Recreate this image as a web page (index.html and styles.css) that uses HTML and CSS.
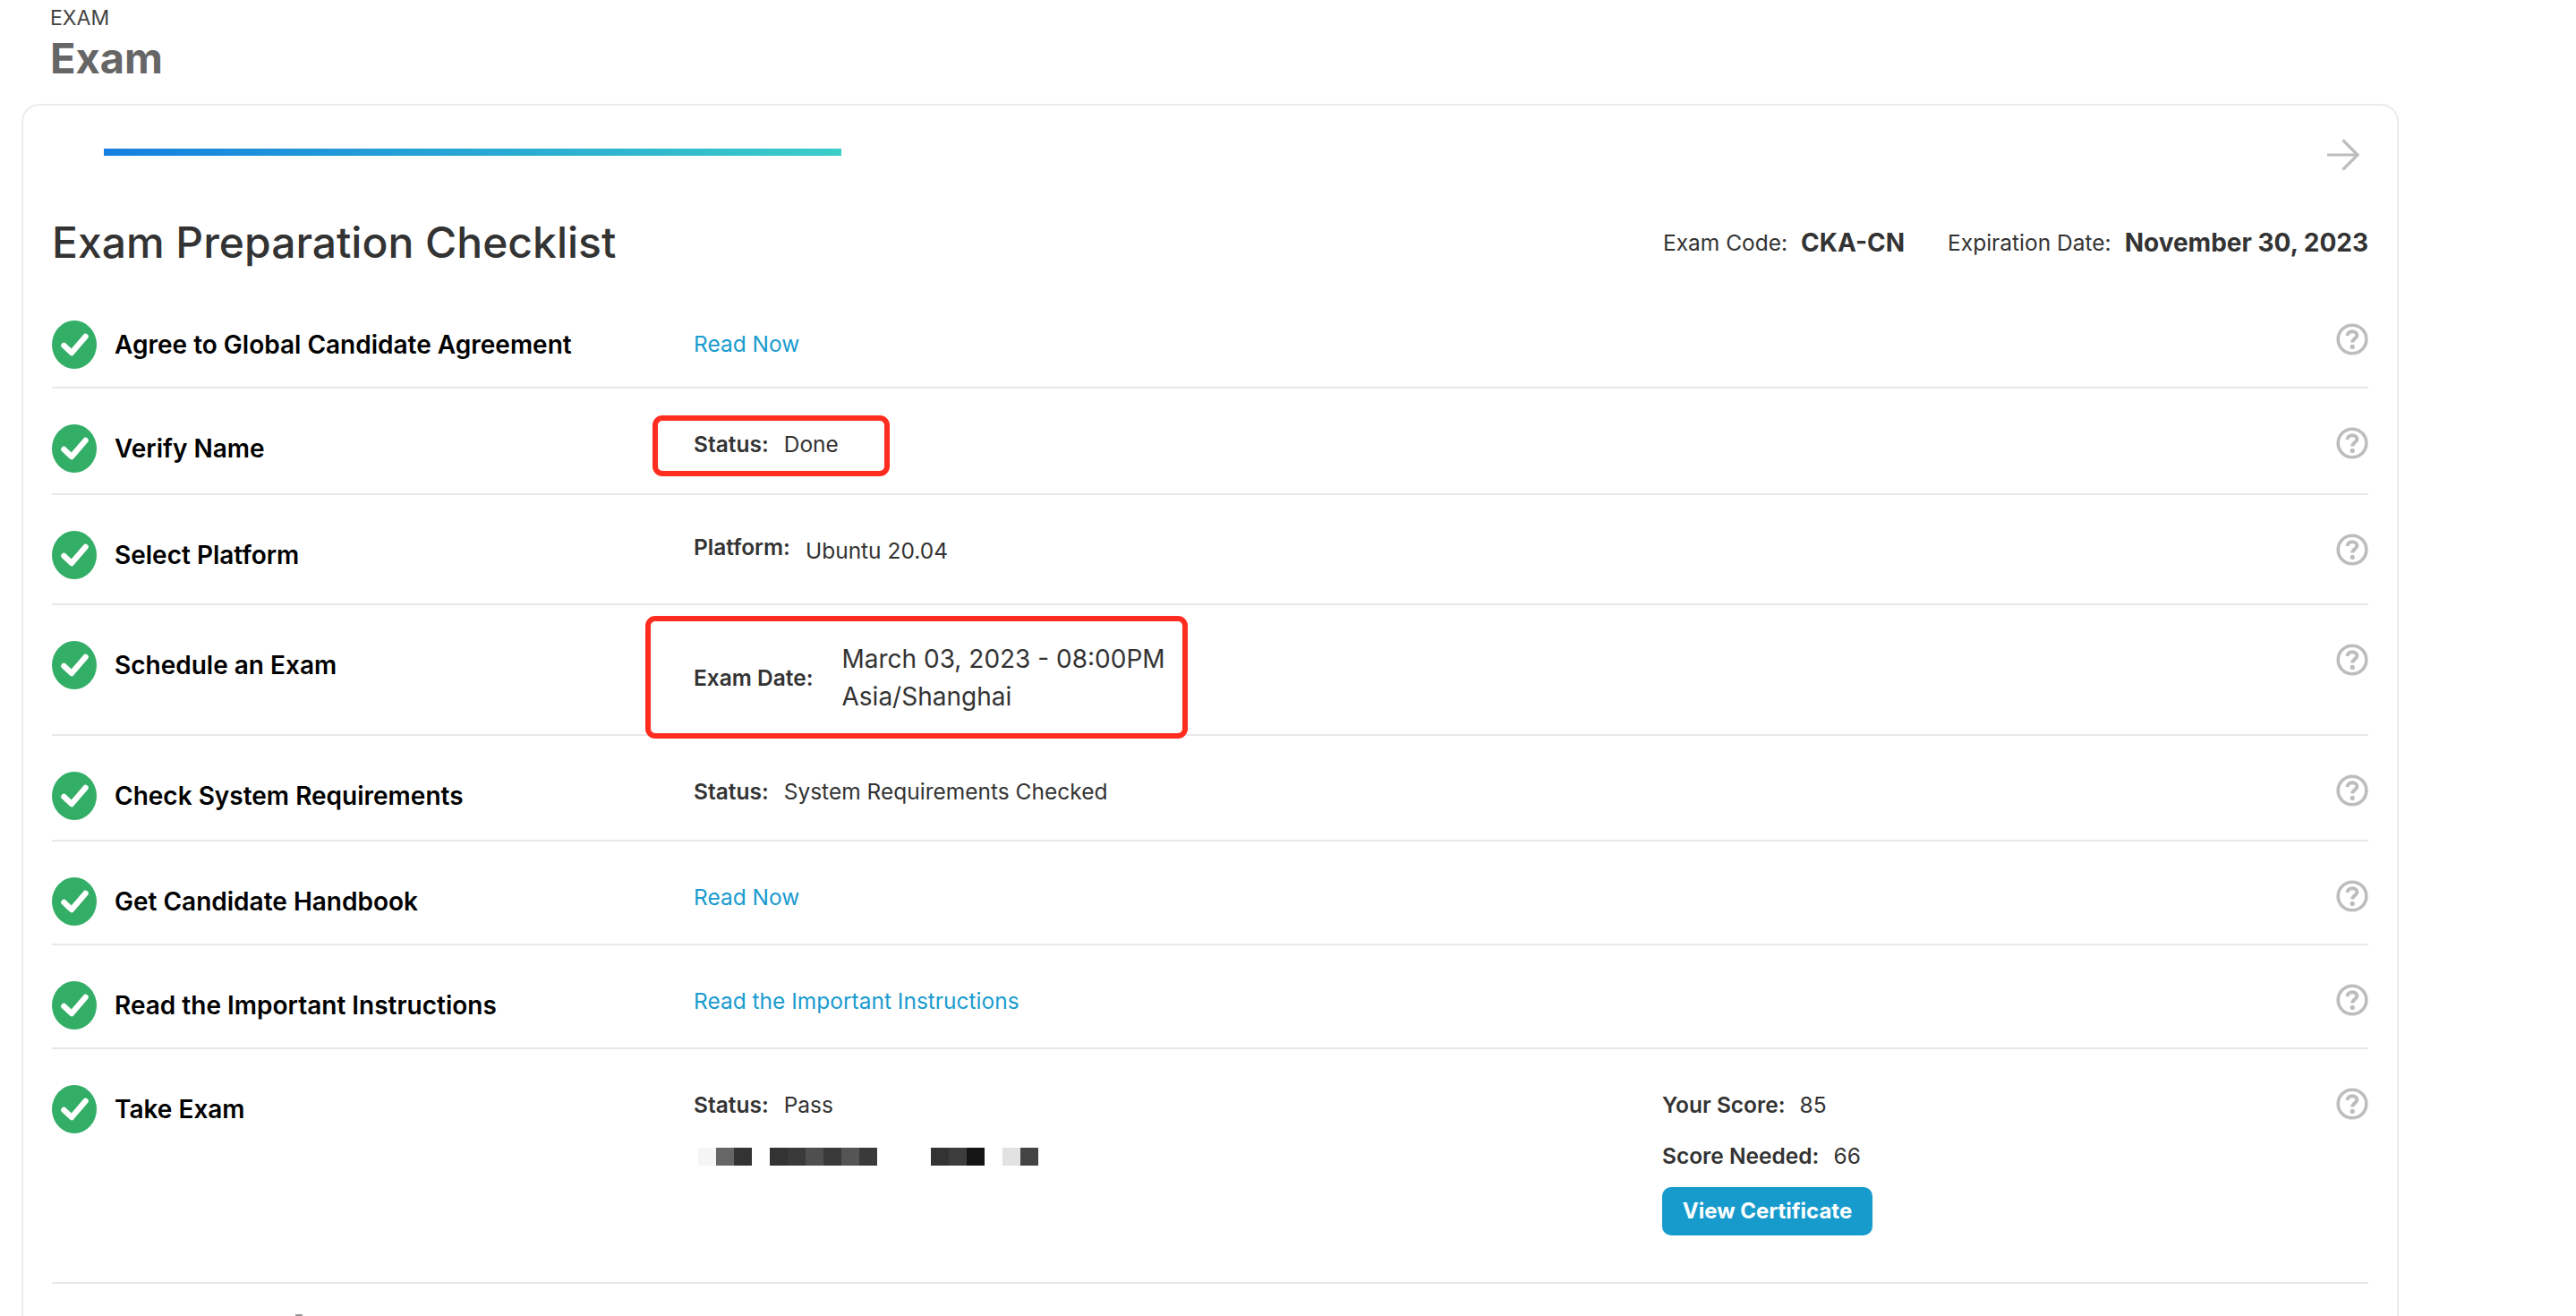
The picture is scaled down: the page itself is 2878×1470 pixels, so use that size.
FILE: index.html
```html
<!DOCTYPE html>
<html>

<head>
    <meta charset="UTF-8">
    <title>Exam</title>
    <link rel="stylesheet" href="styles.css">
</head>

<body>
    <svg class="defs" width="0" height="0">
        <symbol id="ok" viewBox="0 0 50 54">
            <ellipse cx="25" cy="27" rx="25" ry="27" fill="#33ae66" />
            <path d="M13.5 28 L22 36 L37.5 18" fill="none" stroke="#fff" stroke-width="6.5" stroke-linecap="round" stroke-linejoin="round" />
        </symbol>
        <symbol id="help" viewBox="0 0 36 36">
            <circle cx="18" cy="18" r="15.8" fill="none" stroke="#bdbdbd" stroke-width="3.6" />
            <path d="M12.6 14 C12.6 11 15 9.2 18 9.2 C21.2 9.2 23.4 11 23.4 13.6 C23.4 17 18.2 17.2 18.2 21.4" fill="none" stroke="#bdbdbd" stroke-width="4" />
            <circle cx="18.2" cy="26.4" r="2.6" fill="#bdbdbd" />
        </symbol>
    </svg>

    <div class="head">
        <div class="crumb">EXAM</div>
        <h1>Exam</h1>
    </div>

    <div class="card">
        <div class="steps">
            <div class="bar"></div>
            <svg class="next" viewBox="0 0 36 36">
                <path d="M0 18 H34 M17.5 1.5 L34 18 L17.5 34.5" fill="none" stroke="#bdbdbd" stroke-width="3.2" />
            </svg>
        </div>

        <div class="title">
            <h2>Exam Preparation Checklist</h2>
            <div class="meta">
                <span class="meta-key">Exam Code:</span><b class="meta-val">CKA-CN</b>
                <span class="meta-key second">Expiration Date:</span><b class="meta-val">November 30, 2023</b>
            </div>
        </div>

        <div class="row r1">
            <svg class="ok"><use href="#ok" /></svg>
            <div class="name">Agree to Global Candidate Agreement</div>
            <div class="info"><a href="#">Read Now</a></div>
            <svg class="help"><use href="#help" /></svg>
        </div>
        <div class="row r2">
            <svg class="ok"><use href="#ok" /></svg>
            <div class="name">Verify Name</div>
            <div class="info"><b>Status:</b><span>Done</span></div>
            <svg class="help"><use href="#help" /></svg>
            <div class="mark mark-a"></div>
        </div>
        <div class="row r3">
            <svg class="ok"><use href="#ok" /></svg>
            <div class="name">Select Platform</div>
            <div class="info"><b>Platform:</b><span>Ubuntu 20.04</span></div>
            <svg class="help"><use href="#help" /></svg>
        </div>
        <div class="row r4">
            <svg class="ok"><use href="#ok" /></svg>
            <div class="name">Schedule an Exam</div>
            <div class="info date"><b>Exam Date:</b>
                <div class="date-val">March 03, 2023 - 08:00PM<br>Asia/Shanghai</div>
            </div>
            <svg class="help"><use href="#help" /></svg>
            <div class="mark mark-b"></div>
        </div>
        <div class="row r5">
            <svg class="ok"><use href="#ok" /></svg>
            <div class="name">Check System Requirements</div>
            <div class="info"><b>Status:</b><span>System Requirements Checked</span></div>
            <svg class="help"><use href="#help" /></svg>
        </div>
        <div class="row r6">
            <svg class="ok"><use href="#ok" /></svg>
            <div class="name">Get Candidate Handbook</div>
            <div class="info"><a href="#">Read Now</a></div>
            <svg class="help"><use href="#help" /></svg>
        </div>
        <div class="row r7">
            <svg class="ok"><use href="#ok" /></svg>
            <div class="name">Read the Important Instructions</div>
            <div class="info"><a href="#">Read the Important Instructions</a></div>
            <svg class="help"><use href="#help" /></svg>
        </div>
        <div class="row r8">
            <svg class="ok"><use href="#ok" /></svg>
            <div class="name">Take Exam</div>
            <div class="info result">
                <div><b>Status:</b><span>Pass</span></div>
                <div class="blur">
                    <i class="s1"></i><i class="s2"></i><i class="s3"></i><i class="gap"></i>
                    <i class="s3"></i><i class="s4"></i><i class="s5"></i><i class="s4"></i><i class="s6"></i><i class="s4"></i><i class="gap"></i><i class="gap"></i><i class="gap"></i>
                    <i class="s3"></i><i class="s7"></i><i class="s8"></i><i class="gap"></i>
                    <i class="s9"></i><i class="s10"></i>
                </div>
            </div>
            <div class="score">
                <div><b>Your Score:</b><span>85</span></div>
                <div><b>Score Needed:</b><span>66</span></div>
                <a class="btn" href="#">View Certificate</a>
            </div>
            <svg class="help"><use href="#help" /></svg>
        </div>
        <div class="cut"></div>
    </div>
</body>

</html>
```

FILE: styles.css
```css
html,
body {
    height: 100%;
    overflow: hidden;
}

body {
    margin: 0;
    background: #fff;
    color: #333;
    font-family: Inter, "Liberation Sans", sans-serif;
}

a {
    text-decoration: none;
}

.defs {
    display: block;
    height: 0;
}

.head {
    height: 116px;
    padding: 6px 0 0 56px;
    box-sizing: border-box;
}

.crumb {
    font-size: 23px;
    line-height: 28px;
    color: #444;
}

h1 {
    margin: 0;
    font-size: 47px;
    line-height: 62px;
    font-weight: 700;
    color: #666;
}

.card {
    width: 2656px;
    margin-left: 24px;
    padding: 0 32px 120px;
    box-sizing: border-box;
    background: #fff;
    border: 2px solid #ececec;
    border-radius: 20px;
}

.steps {
    height: 62px;
    padding-top: 48px;
    padding-left: 58px;
    display: flex;
    justify-content: space-between;
    align-items: flex-start;
}

.bar {
    width: 824px;
    height: 8px;
    background: linear-gradient(90deg, #1580e0, #3acdc8);
}

.next {
    width: 36px;
    height: 36px;
    margin: -11px 10px 0 0;
}

.title {
    height: 84px;
    margin-bottom: 46px;
    display: flex;
    justify-content: space-between;
    align-items: center;
}

h2 {
    margin: 0;
    font-size: 48px;
    font-weight: 500;
    color: #333;
}

.meta {
    padding-top: 2px;
    font-size: 24.5px;
    display: flex;
    align-items: center;
}

.meta-key {
    margin-right: 15px;
}

.meta-val {
    font-size: 28px;
    font-weight: 700;
}

.second {
    margin-left: 48px;
}

.row {
    position: relative;
    display: flex;
    align-items: flex-start;
    padding-top: 40px;
    border-bottom: 2px solid #e8e8e8;
    box-sizing: border-box;
}

.ok {
    flex: none;
    width: 50px;
    height: 54px;
    margin-right: 20px;
}

.name {
    flex: none;
    width: 647px;
    font-size: 28px;
    font-weight: 600;
    line-height: 54px;
    color: #000;
}

.info {
    flex: none;
    margin-top: -5px;
    font-size: 24.5px;
    line-height: 54px;
    display: flex;
    gap: 17px;
}

.info a {
    color: #1a9bcf;
}

.info b {
    font-weight: 600;
}

.help {
    flex: none;
    width: 36px;
    height: 36px;
    margin-left: auto;
    margin-top: 3px;
}

.r1 {
    height: 76px;
    padding-top: 0;
}

.r1 .info {
    margin-top: -1px;
}

.r2 {
    height: 119px;
}

.r3 {
    height: 123px;
}

.r3 .info b {
    margin-top: -4px;
}

.r4 {
    height: 146px;
}

.r5 {
    height: 118px;
}

.r6 {
    height: 116px;
}

.r7 {
    height: 116px;
}

.r8 {
    height: 262px;
}

.date {
    align-items: center;
    gap: 32px;
    margin-top: -1px;
}

.date-val {
    font-size: 28px;
    line-height: 42px;
}

.result {
    display: block;
    width: 1082px;
}

.score {
    margin-top: -6px;
    font-size: 24.5px;
    line-height: 57px;
    width: 0;
    white-space: nowrap;
}

.score b {
    font-weight: 600;
    margin-right: 16px;
}

.result b {
    margin-right: 17px;
}

.btn {
    display: block;
    width: 235px;
    height: 54px;
    margin-top: 6px;
    border-radius: 10px;
    background: #179bcd;
    color: #fff;
    font-size: 24px;
    font-weight: 700;
    line-height: 54px;
    text-align: center;
}

.blur {
    display: flex;
    height: 20px;
    margin: 21px 0 0 5px;
}

.blur i {
    display: block;
    width: 20px;
    height: 20px;
}

.s1 { background: #f5f5f5; }
.s2 { background: #666; }
.s3 { background: #333; }
.s4 { background: #3a3a3a; }
.s5 { background: #4f4f4f; }
.s6 { background: #555; }
.s7 { background: #3d3d3d; }
.s8 { background: #151515; }
.s9 { background: #e2e2e2; }
.s10 { background: #444; }

.mark {
    position: absolute;
    border: 6px solid #ff2d20;
    border-radius: 11px;
    box-sizing: border-box;
}

.mark-a {
    left: 671px;
    top: 30px;
    width: 265px;
    height: 68px;
}

.mark-b {
    left: 663px;
    top: 12px;
    width: 606px;
    height: 137px;
}

.cut {
    width: 8px;
    height: 3px;
    margin: 34px 0 0 272px;
    background: #999;
}
```
